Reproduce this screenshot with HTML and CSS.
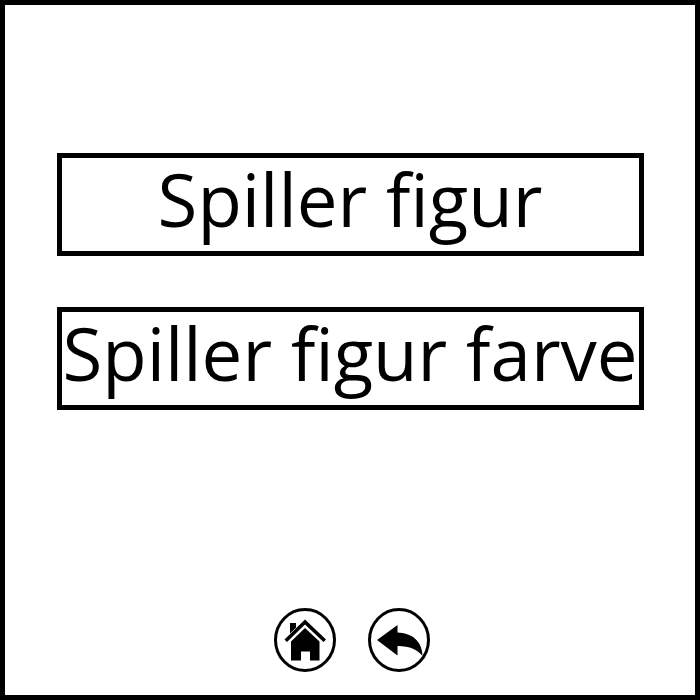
FILE: index.html
```html
<!DOCTYPE html>
<html lang="da">
<head>
    <meta charset="UTF-8">
    <meta name="viewport" content="width=device-width, initial-scale=1.0">
    <title>Spiller figur</title>
    <link rel="stylesheet" href="styles.css">
</head>
<body>

    <div class="screen">
        <div class="menu">
            <button class="menu-btn">Spiller figur</button>
            <button class="menu-btn">Spiller figur farve</button>
        </div>
        <div class="nav">
            <button class="nav-btn" aria-label="Hjem">
                <svg viewBox="0 0 62 64" width="62" height="64">
                    <ellipse cx="31" cy="32" rx="29.5" ry="30.5" class="ring"/>
                    <path d="M16 15h6v4.5l-6 6z"/>
                    <path d="M31 11.5 L10.5 31.5 L13 34 L31 16.5 L49.5 34 L52 31.5 Z"/>
                    <path d="M31 20 L17 33.5 V52.5 H27 V43.5 H36 V52.5 H45.5 V33.5 Z"/>
                </svg>
            </button>
            <button class="nav-btn" aria-label="Tilbage">
                <svg viewBox="0 0 62 64" width="62" height="64">
                    <ellipse cx="31" cy="32" rx="29.5" ry="30.5" class="ring"/>
                    <path d="M9 32 L29.5 17 V24.5 C43 25 54 32 54.5 48 C50 42 42 38 29.5 38 V47.5 Z"/>
                </svg>
            </button>
        </div>
    </div>

</body>
</html>
```
FILE: styles.css
```css
* {
    margin: 0;
    padding: 0;
    box-sizing: border-box;
}
body {
    background-color: white;
    font-family: "Open Sans", "Noto Sans", sans-serif;
    color: black;
}
.screen {
    width: 700px;
    height: 700px;
    border: 5px solid black;
    display: flex;
    flex-direction: column;
    align-items: center;
    justify-content: space-between;
    padding: 148px 0 23px;
}
.menu {
    display: flex;
    flex-direction: column;
    gap: 51px;
}
.menu-btn {
    width: 587px;
    height: 103px;
    border: 5px solid black;
    background-color: white;
    font-family: inherit;
    font-size: 72.6px;
    line-height: 1;
    padding-bottom: 10px;
    white-space: nowrap;
    color: black;
}
.nav {
    display: flex;
    gap: 32px;
    margin-left: 4px;
}
.nav-btn {
    width: 62px;
    height: 64px;
    border: none;
    background: none;
    display: flex;
}
.ring {
    fill: none;
    stroke: black;
    stroke-width: 3;
}
```
